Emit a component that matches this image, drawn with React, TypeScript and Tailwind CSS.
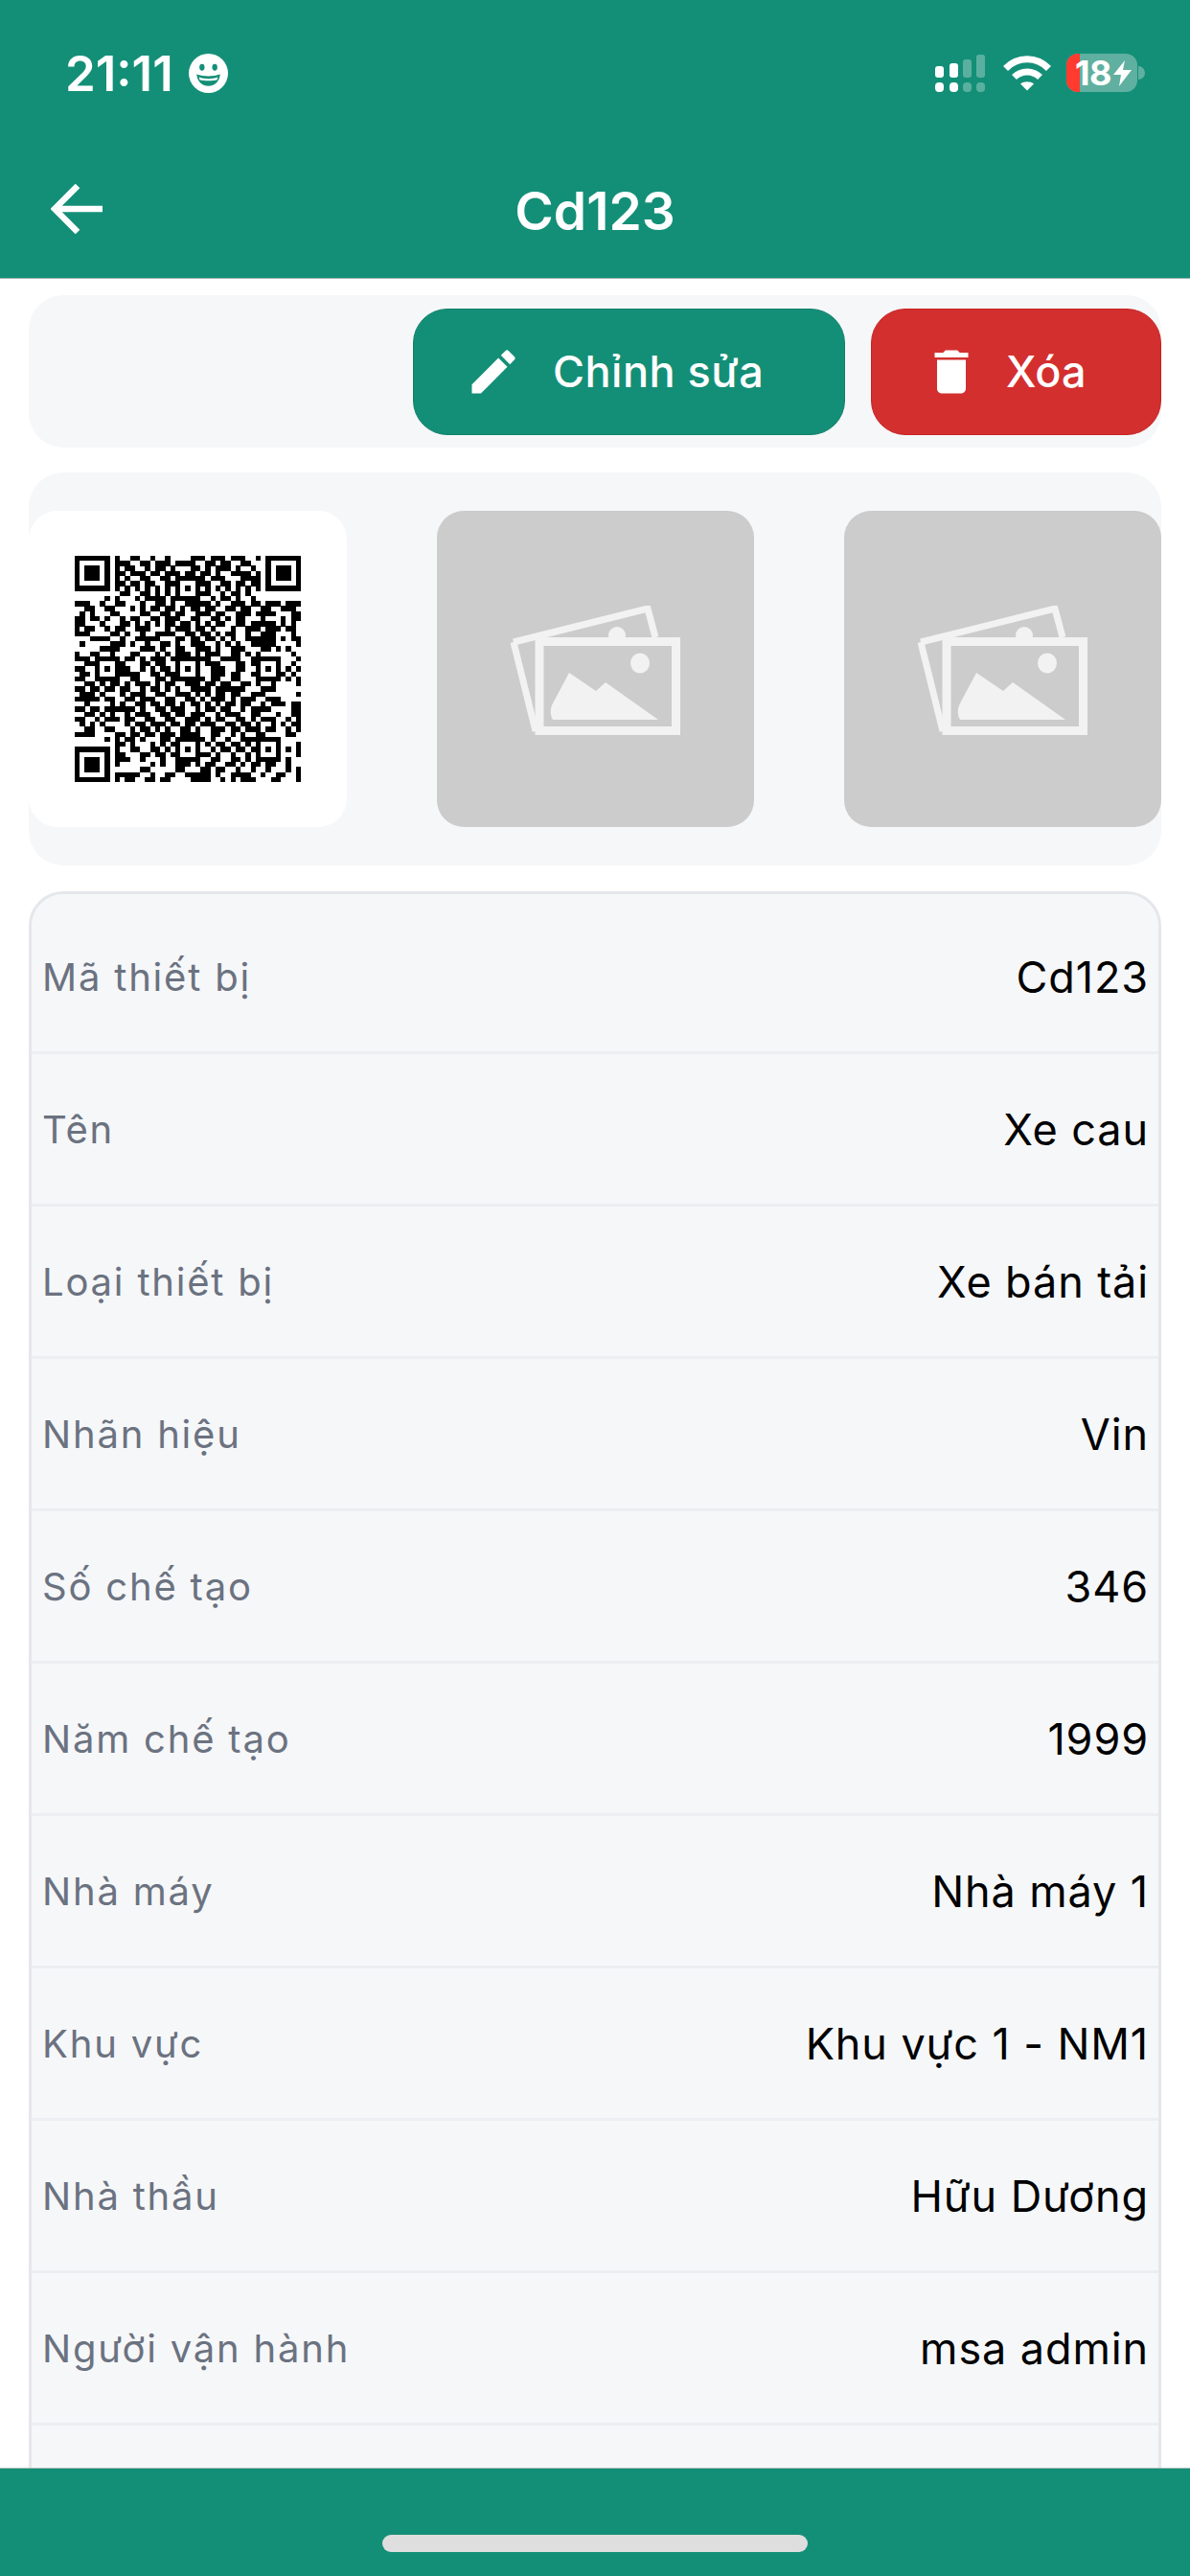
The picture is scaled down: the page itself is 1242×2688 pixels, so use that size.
import { MdDelete, MdEdit } from "react-icons/md"

const qrData = [
  "00000 00010 01100 10010 00011 10111 01110 01000 00000",
  "00000 00011 10011 01110 11110 01101 10011 00000 00000",
  "00000 00010 11001 01101 00011 01011 10100 10000 00000",
  "00000 00011 01110 11011 10110 11010 01111 01000 00000",
  "00000 00010 10011 00110 11001 10111 00011 11000 00000",
  "00000 00011 01101 10011 00010 11001 10110 11000 00000",
  "00000 00000 00000 00000 00000 00000 00000 00000 00000",
  "00000 00001 10011 01010 10011 11001 01101 00000 00000",
  "00000 00010 00101 11101 10111 00101 10100 10000 00000",
  "11100 11011 00010 01101 00111 11010 01110 11011 10111",
  "00110 00100 01010 11011 01011 01100 11011 00110 01110",
  "01010 01110 00011 00110 11001 11011 00111 01111 00011",
  "11011 01001 01100 11011 10011 00110 10110 00100 01011",
  "11000 11001 10101 01011 01101 01011 00110 11111 01010",
  "10110 01011 00111 00010 11101 10100 01001 11011 10110",
  "11100 00110 10010 01111 00110 11010 11001 00111 00010",
  "00011 11001 00111 11000 11011 01101 01001 11111 01011",
  "01000 01111 01001 00110 10011 10010 10100 11111 00001",
  "00000 11110 00011 10100 11001 11010 01110 00110 10100",
  "10011 00100 01100 01010 11101 01110 01101 01000 00010",
  "11100 01110 11010 11101 01110 11001 11100 11110 00001",
  "00111 11011 00011 01100 10011 01110 00110 11011 00010",
  "11000 00101 10010 10110 10110 00111 00110 01010 10101",
  "01100 00101 11100 11011 01011 00111 01100 11011 01010",
  "11001 00110 01100 01101 11011 10110 01100 01111 10101",
  "00110 11110 10111 01011 00111 01101 10011 01001 00001",
  "11011 01101 10010 11010 10011 11011 11110 00111 00000",
  "01110 11001 01110 01100 11101 01011 01100 11100 00001",
  "11111 00100 11011 10011 00110 10111 01011 10011 10000",
  "00100 01101 00110 11011 01011 01010 11011 00101 11011",
  "11011 00111 11010 01101 11001 01101 10010 11110 00011",
  "00110 10100 10111 00110 11011 10010 11100 11000 10011",
  "11001 01110 11001 10011 00111 01011 00110 10111 00101",
  "01010 11000 10110 11101 10110 11100 11011 01001 01011",
  "00110 01100 01011 01010 01101 00111 01101 11011 00101",
  "11110 00011 01101 10111 01111 00110 01010 01100 00110",
  "00000 00010 11010 00110 01101 10100 10011 10010 00000",
  "00000 00011 01000 10101 10111 01011 01101 01101 00001",
  "00000 00010 01100 11010 01111 00101 10110 11001 00101",
  "00000 00011 00011 01101 10100 11010 01001 01101 00001",
  "00000 00011 10010 00100 01110 00110 01101 01110 00100",
  "00000 00010 00000 10100 11101 01100 11010 11011 00100",
  "00000 00000 00011 00000 11000 11011 00100 10010 00101",
  "00000 00011 11100 10011 00111 11010 01111 00100 11001",
  "00000 00010 11001 10110 00011 11001 01011 10001 10001",
]

// fixed parts of the code (finders, alignment, timing) go over the data rows
const buildQr = () => {
  const grid = qrData.map((r) => r.replace(/ /g, "").split("").map((c) => c === "1"))
  const finder = (top: number, left: number) => {
    for (let y = -1; y <= 7; y++) {
      for (let x = -1; x <= 7; x++) {
        if (!grid[top + y] || grid[top + y][left + x] === undefined) continue
        const ring = Math.max(Math.abs(y - 3), Math.abs(x - 3))
        grid[top + y][left + x] = ring !== 2 && ring !== 4
      }
    }
  }
  finder(0, 0)
  finder(0, 38)
  finder(38, 0)
  for (let i = 8; i < 37; i++) {
    grid[6][i] = i % 2 === 0
    grid[i][6] = i % 2 === 0
  }
  const centers = [[6, 22], [22, 6], [22, 22], [22, 38], [38, 22], [38, 38]]
  centers.forEach(([cy, cx]) => {
    for (let y = -2; y <= 2; y++) {
      for (let x = -2; x <= 2; x++) {
        grid[cy + y][cx + x] = Math.max(Math.abs(y), Math.abs(x)) !== 1
      }
    }
  })
  return grid
}

const QrCode = () => (
  <svg viewBox="0 0 45 45" className="w-[236px] h-[236px]" shapeRendering="crispEdges">
    {buildQr().map((row, y) =>
      row.map((on, x) => (on ? <rect key={`${x}-${y}`} x={x} y={y} width="1.02" height="1.02" fill="#000" /> : null))
    )}
  </svg>
)

const PhotoPlaceholder = () => (
  <div className="shrink-0 w-[331px] h-[330px] rounded-[28px] bg-[#cccccc] flex items-center justify-center">
    <svg viewBox="0 0 177 135" className="mt-[3px] w-[177px] h-[135px]">
      <path d="M3 38 L143 3 L151 33" fill="none" stroke="#f2f2f2" strokeWidth="7" />
      <path d="M3 38 L26 131" fill="none" stroke="#f2f2f2" strokeWidth="7" />
      <circle cx="111" cy="31" r="9" fill="#f2f2f2" />
      <rect x="30" y="37.5" width="142.5" height="93" fill="#cccccc" stroke="#f2f2f2" strokeWidth="9" />
      <ellipse cx="135" cy="60" rx="10" ry="10.5" fill="#f2f2f2" />
      <path d="M61 70 L89 89 L99 80 L154 119 L44 119 C40 112 42 105 45 100 Z" fill="#f2f2f2" />
    </svg>
  </div>
)

const StatusIcons = () => (
  <div className="flex items-center">
    <svg viewBox="0 0 52 39" className="w-[52px] h-[39px]" fill="#fff">
      <rect x="0" y="12" width="9" height="12" rx="3" />
      <rect x="15" y="9" width="9" height="15" rx="3" />
      <rect x="29" y="5" width="9" height="19" rx="3" opacity=".3" />
      <rect x="43" y="0" width="9" height="24" rx="3" opacity=".3" />
      <rect x="0" y="29" width="9" height="10" rx="4" />
      <rect x="15" y="29" width="9" height="10" rx="4" />
      <rect x="29" y="29" width="9" height="10" rx="4" opacity=".3" />
      <rect x="43" y="29" width="9" height="10" rx="4" opacity=".3" />
    </svg>
    <svg viewBox="0 0 50 37" className="ml-[19px] w-[50px] h-[37px]" fill="none" stroke="#fff" strokeWidth="7">
      <path d="M2.5 13.5 C15 0.5 35 0.5 47.5 13.5" />
      <path d="M11.5 22.5 C19 15 31 15 38.5 22.5" />
      <path d="M18 29.5 C22 26.5 28 26.5 32 29.5 L25 36.5 Z" fill="#fff" stroke="none" />
    </svg>
    <div className="ml-[16px] flex items-center">
      <div className="relative flex w-[74px] h-[40px] rounded-[12px] bg-[#5fb0a0]">
        <div className="w-[14px] rounded-l-[12px] bg-[#ff3b30]"></div>
        <span className="absolute left-[9px] top-0 leading-[40px] text-[36px] font-bold text-white tracking-[-0.5px]">18</span>
        <svg viewBox="0 0 19 27" className="absolute right-[6px] top-[7px] w-[19px] h-[27px]" fill="#fff">
          <path d="M12 0 L0 15 H8 L6 27 L19 10 H10 Z" />
        </svg>
      </div>
      <div className="w-[7px] h-[14px] ml-[1px] rounded-r-full bg-[#5fb0a0]"></div>
    </div>
  </div>
)

const rows = [
  ["Mã thiết bị", "Cd123"],
  ["Tên", "Xe cau"],
  ["Loại thiết bị", "Xe bán tải"],
  ["Nhãn hiệu", "Vin"],
  ["Số chế tạo", "346"],
  ["Năm chế tạo", "1999"],
  ["Nhà máy", "Nhà máy 1"],
  ["Khu vực", "Khu vực 1 - NM1"],
  ["Nhà thầu", "Hữu Dương"],
  ["Người vận hành", "msa admin"],
]

export default function App() {
  return (
    <div className="w-[1242px] h-[2688px] overflow-hidden flex flex-col bg-white font-['Inter',sans-serif]">
      <header className="shrink-0 bg-[#148f77] h-[291px] border-b border-[#9fb8b2]">
        <div className="h-[150px] pt-[56px] pl-[68px] pr-[47px] flex items-start justify-between">
          <div className="flex items-center">
            <span className="text-[51px] leading-[40px] font-semibold text-white">21:11</span>
            <svg viewBox="0 0 40 40" className="ml-[16px] w-[41px] h-[41px]">
              <circle cx="20" cy="20" r="20" fill="#fff" />
              <ellipse cx="13.5" cy="14" rx="2.6" ry="3.4" fill="#148f77" />
              <ellipse cx="26.5" cy="14" rx="2.6" ry="3.4" fill="#148f77" />
              <path d="M8 21 C15 23.5 25 23.5 32 21 C31 29 26 33 20 33 C14 33 9 29 8 21 Z" fill="#148f77" />
              <path d="M10.5 24 C16 26 24 26 29.5 24 L29 26.5 C24 28 16 28 11 26.5 Z" fill="#fff" />
            </svg>
          </div>
          <StatusIcons />
        </div>
        <div className="relative h-[140px] flex items-center justify-center">
          <svg viewBox="0 0 54 52" className="absolute left-[53px] top-[42px] w-[54px] h-[52px]" fill="none" stroke="#fff" strokeWidth="6.5">
            <path d="M54 26 H4" />
            <path d="M28 2 L4 26 L28 50" />
          </svg>
          <span className="text-[55px] leading-none font-semibold text-white">Cd123</span>
        </div>
      </header>

      <main className="flex-1 min-h-0 overflow-hidden px-[30px] pt-[17px] flex flex-col gap-[26px]">
        <div className="shrink-0 h-[159px] rounded-[36px] bg-[#f6f7f9] flex items-center justify-end gap-[27px]">
          <button className="w-[451px] h-[132px] pl-[53px] rounded-[36px] bg-[#148f77] border border-[#0f7f69] flex items-center text-white">
            <MdEdit className="w-[60px] h-[60px]" />
            <span className="ml-[32px] text-[45px] tracking-[0.5px] font-medium">Chỉnh sửa</span>
          </button>
          <button className="w-[303px] h-[132px] pl-[53px] rounded-[36px] bg-[#d32f2f] border border-[#c62222] flex items-center text-white">
            <MdDelete className="w-[60px] h-[60px]" />
            <span className="ml-[27px] text-[45px] font-medium">Xóa</span>
          </button>
        </div>

        <div className="shrink-0 h-[410px] rounded-[36px] bg-[#f6f7f9] overflow-hidden flex items-center gap-[94px]">
          <div className="shrink-0 w-[332px] h-[330px] rounded-[30px] bg-white flex items-center justify-center">
            <QrCode />
          </div>
          <PhotoPlaceholder />
          <PhotoPlaceholder />
        </div>

        <div className="shrink-0 mt-[1px] rounded-[36px] border-[3px] border-[#e5e7eb] bg-[#f6f7f9] pt-[8px]">
          {rows.map(([label, value]) => (
            <div key={label} className="h-[159px] pl-[11px] pr-[10px] pt-[2px] border-b-[3px] border-[#eceef1] flex items-center justify-between">
              <span className="text-[40px] tracking-[1.8px] text-[#6b7280]">{label}</span>
              <span className="text-[45px] tracking-[0.9px] text-black">{value}</span>
            </div>
          ))}
          <div className="h-[159px]"></div>
        </div>
      </main>

      <footer className="shrink-0 h-[113px] bg-[#148f77] border-t border-[#9fb8b2] flex justify-center pt-[69px]">
        <div className="w-[444px] h-[18px] rounded-full bg-[#dedede]"></div>
      </footer>
    </div>
  )
}
